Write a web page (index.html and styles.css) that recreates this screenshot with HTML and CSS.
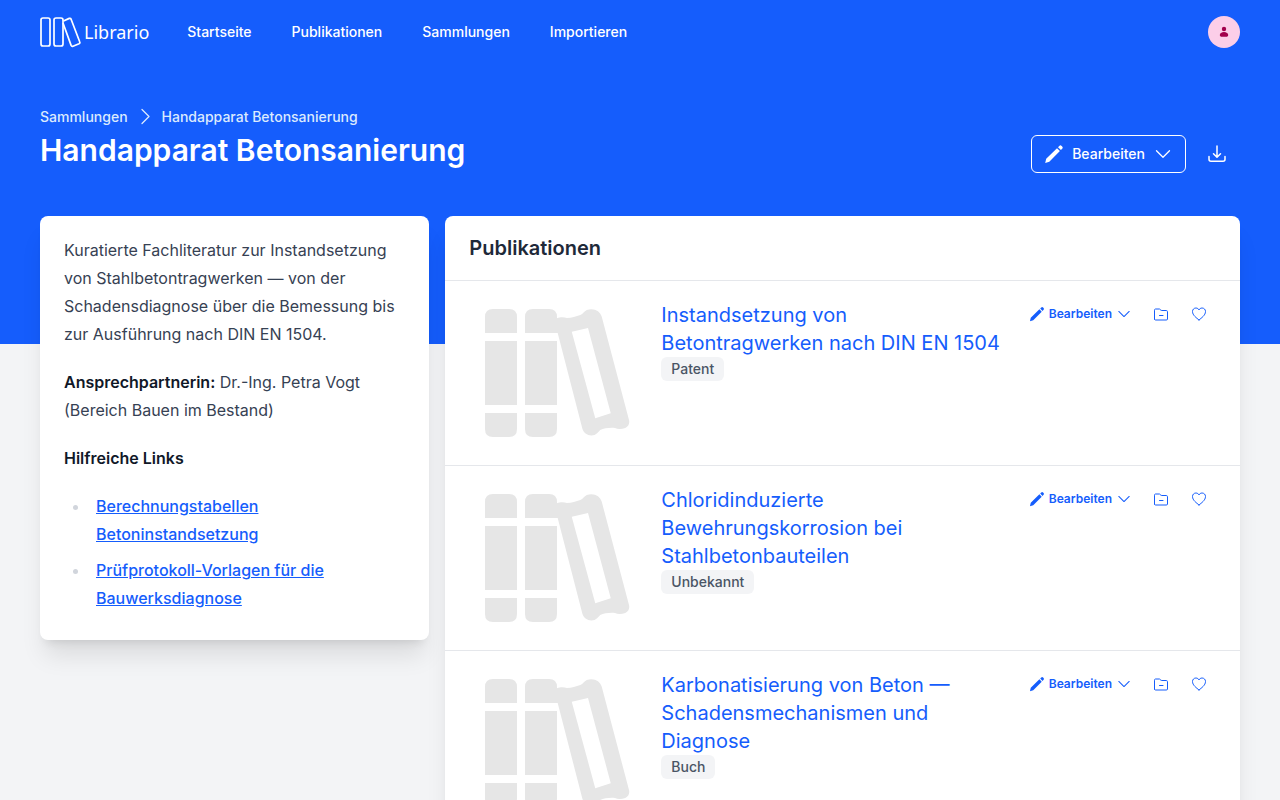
FILE: index.html
```html
<!DOCTYPE html>
<html lang="de">
<head>
<meta charset="utf-8">
<meta name="viewport" content="width=device-width, initial-scale=1">
<title>Handapparat Betonsanierung – Librario</title>
<link rel="stylesheet" href="styles.css">
</head>
<body>
<svg class="sprite" aria-hidden="true">
  <symbol id="pencil" viewBox="0 0 20 20"><path d="M1.200 19 2.200 14.800 13 4.200l2.900 2.900L5.300 17.800zM14 3.200l1.300-1.300a1.600 1.600 0 0 1 2.300 0l.6.6a1.600 1.600 0 0 1 0 2.300l-1.300 1.300z"/></symbol>
  <symbol id="chevron" viewBox="0 0 20 20"><path d="m3.500 6.800 6.500 6.400 6.500-6.400"/></symbol>
  <symbol id="folder" viewBox="0 0 16 16"><path d="M1.500 13V4.200c0-.9.5-1.200 1.100-1.200h3.500c.4 0 .7.100.9.400l.9.800c.3.200.5.300.9.300h4.500c.7 0 1.200.5 1.200 1.200v7.300c0 .8-.5 1-1.200 1H2.700c-.7 0-1.200-.3-1.200-1zM6.500 9.500h3.500"/></symbol>
  <symbol id="heart" viewBox="0 0 16 16"><path d="M8 13.900C5.500 12 1.500 9.200 1.500 5.500c0-2 1.500-3.500 3.400-3.500C6.300 2 7.500 2.800 8 4c.5-1.200 1.700-2 3.100-2 1.900 0 3.400 1.500 3.400 3.500 0 3.700-4 6.500-6.500 8.400z"/></symbol>
  <symbol id="books" viewBox="0 0 576 512"><path fill-rule="evenodd" d="M0 96V32Q0 0 32 0h64q32 0 32 32v64zM0 128h128v256H0zM0 416h128v64q0 32-32 32H32q-32 0-32-32zM160 96V32q0-32 32-32h64q32 0 32 32v5c18-7 30-3 40-1 18-1 37-6 53-12 12-5 15-14 26-20 27-10 54 3 60 27l109 413c3 14-1 26-15 32-14 5-31 5-41 0-16-3-45 1-59 8-6 6-14 17-23 20-22 6-44-5-49-27L291 97V96zM160 128h128v256H160zM160 416h128v64q0 32-32 32h-64q-32 0-32-32zM347 91l94 346 62-20-91-341z"/></symbol>
</svg>

<div class="hero">
  <header class="topbar">
    <a class="brand" href="#">
      <svg class="brand-mark" viewBox="0 0 41 31" aria-hidden="true"><rect x="1" y="1" width="9" height="28" rx="2"/><rect x="14" y="1" width="9" height="28" rx="2"/><path d="m23.500 4 5.800-2.600q1.200-.5 1.800.8l8.600 22.600q.6 1.400-.7 2L33 29.200q-1.300.5-1.900-.8L23 6"/></svg>
      <span>Librario</span>
    </a>
    <nav class="menu" aria-label="Hauptnavigation">
      <a href="#">Startseite</a><a href="#">Publikationen</a><a href="#">Sammlungen</a><a href="#">Importieren</a>
    </nav>
    <button class="avatar" type="button" aria-label="Benutzermenü"><svg viewBox="0 0 12 12" aria-hidden="true"><circle cx="6" cy="3" r="2.200"/><path d="M6 6c2.500 0 4.200 1.400 4.200 3 0 1.200-.8 1.800-2 1.800H3.800c-1.200 0-2-.6-2-1.800 0-1.600 1.700-3 4.200-3z"/></svg></button>
  </header>
  <div class="heading">
    <div>
      <nav class="crumbs" aria-label="Brotkrumen">
        <a href="#">Sammlungen</a>
        <svg class="line crumb-sep" viewBox="0 0 20 20" aria-hidden="true"><path d="m7 2.500 7 7-7 7"/></svg>
        <a href="#">Handapparat Betonsanierung</a>
      </nav>
      <h1>Handapparat Betonsanierung</h1>
    </div>
    <div class="heading-actions">
      <button class="edit edit-outlined" type="button"><svg class="solid"><use href="#pencil"/></svg>Bearbeiten<svg class="line"><use href="#chevron"/></svg></button>
      <button class="download" type="button" aria-label="Herunterladen"><svg class="line" viewBox="0 0 20 20" aria-hidden="true"><path d="M10 2v11M6.500 9.700l3.500 3.500 3.500-3.500M2 12.500v2.800q0 2 2 2h12q2 0 2-2v-2.800"/></svg></button>
    </div>
  </div>
</div>

<main class="content">
  <aside class="card about">
    <p>Kuratierte Fachliteratur zur Instandsetzung von Stahlbetontragwerken — von der Schadensdiagnose über die Bemessung bis zur Ausführung nach DIN EN 1504.</p>
    <p><strong>Ansprechpartnerin:</strong> Dr.-Ing. Petra Vogt (Bereich Bauen im Bestand)</p>
    <p><strong>Hilfreiche Links</strong></p>
    <ul>
      <li><a href="#">Berechnungstabellen Betoninstandsetzung</a></li>
      <li><a href="#">Prüfprotokoll-Vorlagen für die Bauwerksdiagnose</a></li>
    </ul>
  </aside>
  <section class="card">
    <h2>Publikationen</h2>
    <article class="item">
      <svg class="cover" aria-hidden="true"><use href="#books"/></svg>
      <div class="item-text"><a class="item-title" href="#">Instandsetzung von Betontragwerken nach DIN EN 1504</a><span class="badge">Patent</span></div>
      <div class="item-actions">
        <button class="edit" type="button"><svg class="solid"><use href="#pencil"/></svg>Bearbeiten<svg class="line"><use href="#chevron"/></svg></button>
        <button class="icon" type="button" aria-label="Aus Sammlung entfernen"><svg class="line"><use href="#folder"/></svg></button>
        <button class="icon" type="button" aria-label="Merken"><svg class="line"><use href="#heart"/></svg></button>
      </div>
    </article>
    <article class="item">
      <svg class="cover" aria-hidden="true"><use href="#books"/></svg>
      <div class="item-text"><a class="item-title" href="#">Chloridinduzierte Bewehrungskorrosion bei Stahlbetonbauteilen</a><span class="badge">Unbekannt</span></div>
      <div class="item-actions">
        <button class="edit" type="button"><svg class="solid"><use href="#pencil"/></svg>Bearbeiten<svg class="line"><use href="#chevron"/></svg></button>
        <button class="icon" type="button" aria-label="Aus Sammlung entfernen"><svg class="line"><use href="#folder"/></svg></button>
        <button class="icon" type="button" aria-label="Merken"><svg class="line"><use href="#heart"/></svg></button>
      </div>
    </article>
    <article class="item">
      <svg class="cover" aria-hidden="true"><use href="#books"/></svg>
      <div class="item-text"><a class="item-title" href="#">Karbonatisierung von Beton — Schadensmechanismen und Diagnose</a><span class="badge">Buch</span></div>
      <div class="item-actions">
        <button class="edit" type="button"><svg class="solid"><use href="#pencil"/></svg>Bearbeiten<svg class="line"><use href="#chevron"/></svg></button>
        <button class="icon" type="button" aria-label="Aus Sammlung entfernen"><svg class="line"><use href="#folder"/></svg></button>
        <button class="icon" type="button" aria-label="Merken"><svg class="line"><use href="#heart"/></svg></button>
      </div>
    </article>
  </section>
</main>
</body>
</html>
```

FILE: styles.css
```css
*, *::before, *::after { box-sizing: border-box; }
html { scrollbar-width: none; }
body { margin: 0; background: #f3f4f6; color: #364153; font-family: Inter, sans-serif; font-size: 16px; line-height: 28px; }
a { color: inherit; text-decoration: none; }
button { margin: 0; padding: 0; border: 0; background: none; color: inherit; font: inherit; cursor: pointer; }
svg { display: block; flex: none; }
.sprite { position: absolute; width: 0; height: 0; }
.solid { fill: currentColor; }
.line { fill: none; stroke: currentColor; stroke-width: 1.3; stroke-linecap: round; stroke-linejoin: round; }

.hero { background: #155dfc; color: #fff; padding: 0 40px 171px; }
.topbar { display: flex; align-items: center; height: 64px; }
.brand { display: flex; align-items: center; gap: 3px; margin-right: 38px; font-family: "Noto Sans", sans-serif; font-size: 18px; }
.brand-mark { width: 41px; height: 31px; fill: none; stroke: currentColor; stroke-width: 1.7; stroke-linejoin: round; }
.menu { display: flex; gap: 40px; font-size: 14px; line-height: 20px; font-weight: 500; }
.avatar { display: grid; place-items: center; width: 32px; height: 32px; margin-left: auto; border-radius: 50%; background: #fccee8; }
.avatar svg { width: 12px; height: 12px; fill: #a3004c; }

.heading { display: flex; align-items: flex-end; justify-content: space-between; padding-top: 43px; }
.crumbs { display: flex; align-items: center; gap: 7px; font-size: 14px; line-height: 20px; font-weight: 500; color: #dbeafe; }
.crumb-sep { width: 20px; height: 20px; }
h1 { margin: 5px 0; font-size: 30px; line-height: 36px; font-weight: 600; }
.heading-actions { display: flex; gap: 8px; }
.edit { display: flex; align-items: center; gap: 4px; height: 26px; padding: 0 6px; font-size: 12px; line-height: 16px; font-weight: 600; }
.edit svg { width: 16px; height: 16px; }
.edit-outlined { gap: 8px; height: 38px; padding: 0 12px; border: 1px solid #fff; border-radius: 6px; font-size: 14px; line-height: 20px; font-weight: 500; }
.edit-outlined svg { width: 20px; height: 20px; }
.download { display: grid; place-items: center; width: 46px; height: 38px; }
.download svg { width: 20px; height: 20px; stroke-width: 1.5; }

.content { display: grid; grid-template-columns: repeat(3, minmax(0, 1fr)); gap: 16px; align-items: start; margin-top: -128px; padding: 0 40px 40px; }
.card { grid-column: span 2; overflow: hidden; border-radius: 8px; background: #fff; box-shadow: 0 20px 25px -5px rgb(0 0 0 / 10%), 0 8px 10px -6px rgb(0 0 0 / 10%); }
.about { grid-column: span 1; padding: 20px 24px; }
.about p { margin: 0 0 20px; }
.about strong { color: #101828; font-weight: 600; }
.about ul { margin: 0; padding-left: 26px; }
.about li { margin-bottom: 8px; padding-left: 6px; }
.about li::marker { color: #d1d5dc; }
.about li a { color: #155dfc; font-weight: 500; text-decoration: underline; }

h2 { margin: 0; padding: 18px 24px; font-size: 20px; line-height: 28px; font-weight: 600; color: #1e2939; }
.item { display: flex; gap: 16px; min-height: 185px; padding: 20px 26px 20px 24px; border-top: 1px solid #e5e7eb; }
.cover { width: 176px; height: 128px; margin-top: 8px; fill: #e6e6e6; }
.item-text { flex: 1; min-width: 0; }
.item-title { display: block; font-size: 20px; color: #155dfc; }
.badge { display: table; padding: 2px 10px; border-radius: 6px; background: #f3f4f6; color: #4a5565; font-size: 14px; line-height: 20px; font-weight: 500; }
.item-actions { display: flex; align-items: flex-start; gap: 8px; color: #155dfc; }
.icon { display: grid; place-items: center; width: 30px; height: 26px; }
.icon svg { width: 16px; height: 16px; stroke-width: 1; }
```
